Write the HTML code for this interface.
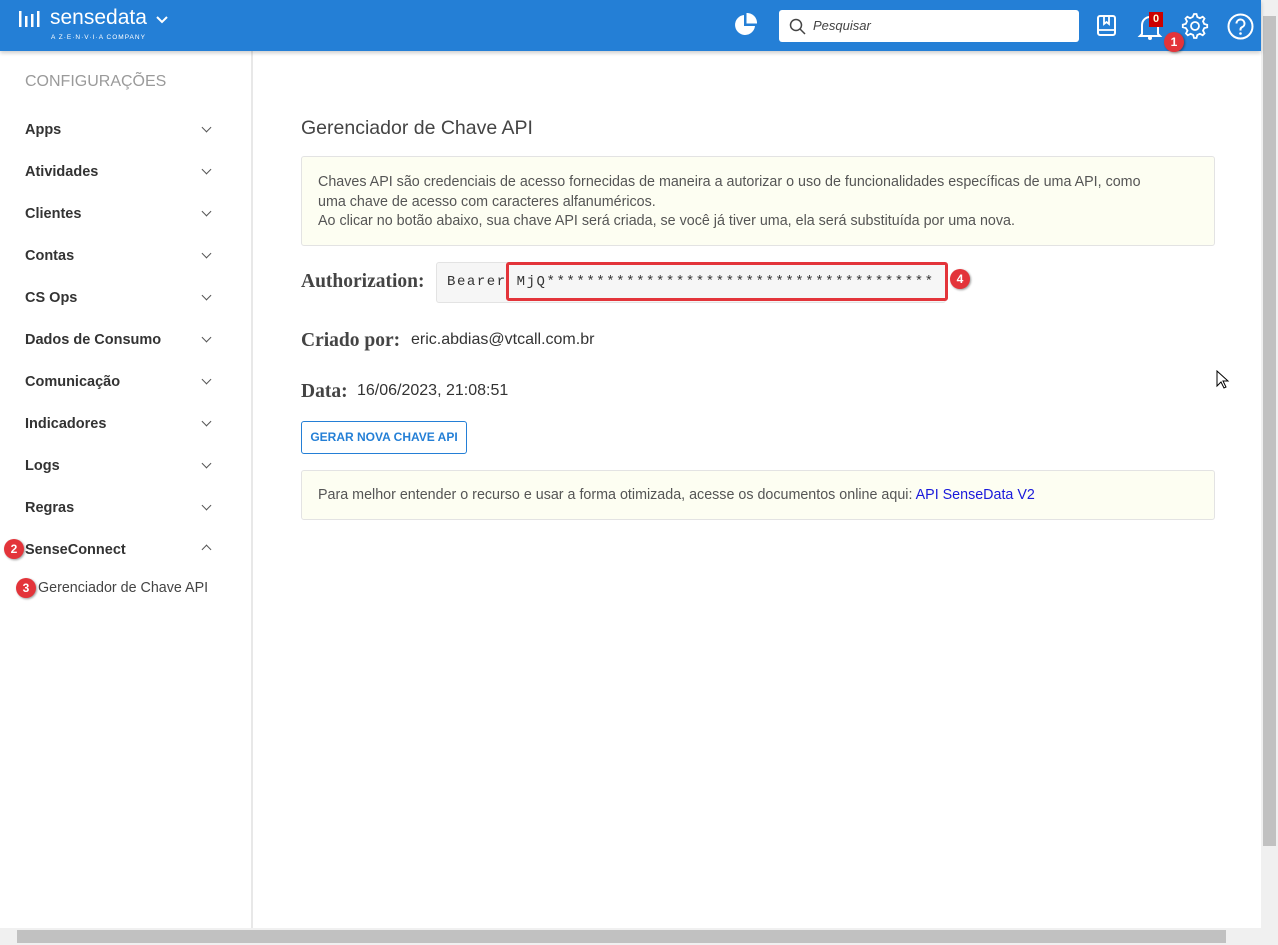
<!DOCTYPE html>
<html><head><meta charset="utf-8"><style>
*{box-sizing:border-box;margin:0;padding:0}
body{width:1278px;height:945px;overflow:hidden;background:#fff;font-family:"Liberation Sans",sans-serif;position:relative;color:#333}
.top{position:absolute;left:0;top:0;width:1261px;height:51px;background:#247fd6;box-shadow:0 2px 4px rgba(0,0,0,.2);z-index:2}
.side{position:absolute;left:0;top:51px;width:253px;height:877px;border-right:2px solid #e8e8e8}
.abs{position:absolute}
.nav{position:absolute;left:25px;font-size:14.5px;font-weight:bold;color:#333}
.chev{position:absolute;left:203px;width:7px;height:7px;border-right:1.6px solid #555;border-bottom:1.6px solid #555;transform:rotate(45deg)}
.badge{position:absolute;width:20px;height:20px;border-radius:50%;background:#e3343a;color:#fff;font-size:12px;font-weight:bold;text-align:center;line-height:20px;box-shadow:1px 1px 2px rgba(0,0,0,.4);z-index:5}
.box{position:absolute;left:301px;width:914px;background:#fdfef2;border:1px solid #e3e3e3;border-radius:3px;font-size:14.3px;color:#555;line-height:19.5px}
.lbl{font-family:"Liberation Serif",serif;font-weight:bold;font-size:19.5px;color:#444}
</style></head><body>
<div class="top">
  <svg class="abs" style="left:19px;top:9px" width="24" height="20"><g fill="#fff"><rect x="0" y="2" width="2.5" height="16"/><rect x="6" y="7" width="2.5" height="11"/><rect x="12" y="5" width="2.5" height="13"/><rect x="18" y="2" width="2.5" height="16"/></g></svg>
  <div class="abs" style="left:50px;top:6px;color:#fff;font-size:21px">sensedata</div>
  <svg class="abs" style="left:156px;top:16px" width="12" height="8"><path d="M1 1l5 5 5-5" stroke="#fff" stroke-width="2" fill="none"/></svg>
  <div class="abs" style="left:51px;top:34px;color:#fff;font-size:6.5px;letter-spacing:1px">A Z·E·N·V·I·A COMPANY</div>
  <svg class="abs" style="left:733px;top:13px" width="24" height="24"><path d="M11 2A10 10 0 1 0 22 13H11z" fill="#fff"/><path d="M13.5 0A10 10 0 0 1 24 10.5H13.5z" fill="#fff"/></svg>
  <div class="abs" style="left:779px;top:10px;width:300px;height:32px;background:#fff;border-radius:3px"></div>
  <svg class="abs" style="left:789px;top:18px" width="17" height="17"><circle cx="7" cy="7" r="5.5" stroke="#444" stroke-width="1.5" fill="none"/><path d="M11 11l5 5" stroke="#444" stroke-width="1.5"/></svg>
  <div class="abs" style="left:813px;top:18px;font-size:13px;font-style:italic;color:#444">Pesquisar</div>
  <svg class="abs" style="left:1096px;top:14px" width="22" height="24"><rect x="2" y="2" width="17" height="19" rx="2" stroke="#fff" stroke-width="2" fill="none"/><path d="M2 16h17M8 2v8l2.5-2 2.5 2V2" stroke="#fff" stroke-width="1.8" fill="none"/></svg>
  <svg class="abs" style="left:1137px;top:13px" width="26" height="28"><path d="M5 21V12a8 8 0 0 1 16 0v9l2 2H3z" stroke="#fff" stroke-width="2" fill="none"/><circle cx="13" cy="25" r="2" fill="#fff"/></svg>
  <div class="abs" style="left:1149px;top:12px;width:14px;height:15px;background:#c00;color:#ffd;font-size:11px;font-weight:bold;text-align:center;line-height:15px">0</div>
  <svg class="abs" style="left:1181px;top:12px" width="28" height="28"><path d="M14 3l2.5 0 .8 3 2.6 1.2 2.8-1.5 1.8 1.8-1.5 2.8L24.2 13l3 .8v2.5l-3 .8-1.2 2.6 1.5 2.8-1.8 1.8-2.8-1.5-2.6 1.2-.8 3h-2.5l-.8-3-2.6-1.2-2.8 1.5-1.8-1.8 1.5-2.8L5.8 17l-3-.8v-2.5l3-.8 1.2-2.6-1.5-2.8 1.8-1.8 2.8 1.5L12.7 6z" stroke="#fff" stroke-width="1.8" fill="none" transform="translate(-1,-1)"/><circle cx="14" cy="14" r="4" stroke="#fff" stroke-width="1.8" fill="none"/></svg>
  <svg class="abs" style="left:1227px;top:13px" width="27" height="27"><circle cx="13.5" cy="13.5" r="12" stroke="#fff" stroke-width="2" fill="none"/><path d="M9.5 10.5a4 4 0 1 1 5.5 3.7c-1 .5-1.5 1.2-1.5 2.3v1" stroke="#fff" stroke-width="2" fill="none"/><circle cx="13.5" cy="20.5" r="1.3" fill="#fff"/></svg>
</div>
<div class="badge" style="left:1164px;top:32px">1</div>
<div class="side">
  <div class="abs" style="left:25px;top:22px;font-size:16px;color:#9a9a9a">CONFIGURAÇÕES</div>
</div>
<div class="nav" style="top:122px">Apps</div><div class="chev" style="top:124px"></div>
<div class="nav" style="top:164px">Atividades</div><div class="chev" style="top:166px"></div>
<div class="nav" style="top:206px">Clientes</div><div class="chev" style="top:208px"></div>
<div class="nav" style="top:248px">Contas</div><div class="chev" style="top:250px"></div>
<div class="nav" style="top:290px">CS Ops</div><div class="chev" style="top:292px"></div>
<div class="nav" style="top:332px">Dados de Consumo</div><div class="chev" style="top:334px"></div>
<div class="nav" style="top:374px">Comunicação</div><div class="chev" style="top:376px"></div>
<div class="nav" style="top:416px">Indicadores</div><div class="chev" style="top:418px"></div>
<div class="nav" style="top:458px">Logs</div><div class="chev" style="top:460px"></div>
<div class="nav" style="top:500px">Regras</div><div class="chev" style="top:502px"></div>
<div class="nav" style="top:542px">SenseConnect</div><div class="chev" style="top:546px;transform:rotate(225deg)"></div>
<div class="badge" style="left:4px;top:539px">2</div>
<div class="abs" style="left:38px;top:580px;font-size:14.3px;color:#444">Gerenciador de Chave API</div>
<div class="badge" style="left:16px;top:578px">3</div>

<div class="abs" style="left:301px;top:117px;font-size:19.5px;color:#444">Gerenciador de Chave API</div>
<div class="box" style="top:156px;height:90px;padding:16px 16px">Chaves API são credenciais de acesso fornecidas de maneira a autorizar o uso de funcionalidades específicas de uma API, como<br>uma chave de acesso com caracteres alfanuméricos.<br>Ao clicar no botão abaixo, sua chave API será criada, se você já tiver uma, ela será substituída por uma nova.</div>
<div class="abs lbl" style="left:301px;top:271px">Authorization:</div>
<div class="abs" style="left:436px;top:262px;width:510px;height:41px;background:#f6f6f6;border:1px solid #e3e3e3;border-radius:3px;font-family:'Liberation Mono',monospace;font-size:14px;letter-spacing:1.55px;line-height:39px;padding-left:10px;color:#333;white-space:nowrap">Bearer MjQ***************************************</div>
<div class="abs" style="left:506px;top:262px;width:442px;height:39px;border:3px solid #e3343a;border-radius:3px"></div>
<div class="badge" style="left:950px;top:269px">4</div>
<div class="abs lbl" style="left:301px;top:330px">Criado por:</div>
<div class="abs" style="left:411px;top:331px;font-size:16px;color:#333">eric.abdias@vtcall.com.br</div>
<div class="abs lbl" style="left:301px;top:381px">Data:</div>
<div class="abs" style="left:357px;top:382px;font-size:16px;color:#333">16/06/2023, 21:08:51</div>
<div class="abs" style="left:301px;top:421px;width:166px;height:33px;border:1px solid #247fd6;border-radius:3px;color:#247fd6;font-size:12px;font-weight:bold;text-align:center;line-height:31px">GERAR NOVA CHAVE API</div>
<div class="box" style="top:470px;height:50px;padding:15px 16px">Para melhor entender o recurso e usar a forma otimizada, acesse os documentos online aqui: <span style="color:#1a1adb">API SenseData V2</span></div>

<svg class="abs" style="left:1216px;top:370px" width="14" height="20"><path d="M1 1v15l4-4 3 6 2-1-3-6h5z" fill="#fff" stroke="#000" stroke-width="1"/></svg>
<div class="abs" style="left:1261px;top:0;width:17px;height:928px;background:#f0f0f0"></div>
<div class="abs" style="left:1263px;top:16px;width:13px;height:830px;background:#c1c1c1"></div>
<div class="abs" style="left:0;top:928px;width:1278px;height:17px;background:#f0f0f0"></div>
<div class="abs" style="left:17px;top:930px;width:1209px;height:13px;background:#c1c1c1"></div>
</body></html>
